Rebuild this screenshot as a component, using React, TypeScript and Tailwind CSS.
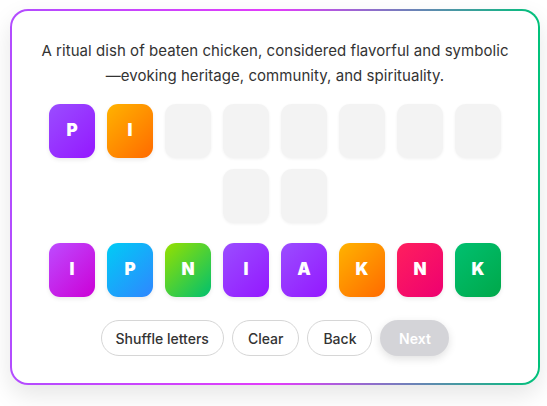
import React from "react";

const slotTop = [
  { l: "P", g: "bg-[linear-gradient(135deg,#9a4dff,#9418ff)]" },
  { l: "I", g: "bg-[linear-gradient(135deg,#ffb300,#ff6a00)]" },
];

const letters = [
  { l: "I", g: "bg-[linear-gradient(135deg,#bd4bff,#cc00d6)]" },
  { l: "P", g: "bg-[linear-gradient(135deg,#00ccf5,#2f86ff)]" },
  { l: "N", g: "bg-[linear-gradient(135deg,#96e000,#00c06e)]" },
  { l: "I", g: "bg-[linear-gradient(135deg,#9a4dff,#9418ff)]" },
  { l: "A", g: "bg-[linear-gradient(135deg,#9a4dff,#9418ff)]" },
  { l: "K", g: "bg-[linear-gradient(135deg,#ffb300,#ff6a00)]" },
  { l: "N", g: "bg-[linear-gradient(135deg,#ff1f5e,#ee0070)]" },
  { l: "K", g: "bg-[linear-gradient(135deg,#00c070,#00a84a)]" },
];

function Tile({ l, g }: { l: string; g: string }) {
  return (
    <div
      className={`w-[46px] h-[54px] rounded-[11px] ${g} flex items-center justify-center text-white text-[17px] font-black shadow-[0_2px_4px_rgba(0,0,0,0.08)]`}
    >
      {l}
    </div>
  );
}

function Empty() {
  return <div className="w-[46px] h-[54px] rounded-[11px] bg-[#f3f3f3] shadow-[0_1px_3px_rgba(0,0,0,0.06)]" />;
}

export default function App() {
  return (
    <div className="min-h-screen bg-white pt-[9px] pl-[10px]" style={{ fontFamily: "Inter, 'Noto Sans', sans-serif" }}>
      <div className="w-[530px] h-[376px] rounded-[18px] p-[2px] bg-[linear-gradient(90deg,#b24cff_0%,#e23cfa_50%,#00c27a_100%)] shadow-[0_10px_24px_rgba(0,0,0,0.10)]">
        <div className="w-full h-full rounded-[16px] bg-white flex flex-col items-center pt-[27px]">
          <p className="text-[15px] leading-[25px] text-[#333] text-center w-[480px] tracking-[0.05px]">
            A ritual dish of beaten chicken, considered flavorful and symbolic —evoking heritage, community, and spirituality.
          </p>
          <div className="mt-[16px] w-[452px] flex flex-wrap justify-center gap-x-[12px] gap-y-[11px]">
            {slotTop.map((t, i) => (
              <Tile key={"s" + i} l={t.l} g={t.g} />
            ))}
            {Array.from({ length: 8 }).map((_, i) => (
              <Empty key={i} />
            ))}
          </div>
          <div className="mt-[20px] flex gap-[12px]">
            {letters.map((t, i) => (
              <Tile key={i} l={t.l} g={t.g} />
            ))}
          </div>
          <div className="mt-[23px] flex gap-[8px]">
            <button className="h-[36px] px-[14px] rounded-full border border-[#d6d6d6] bg-white text-[14px] font-medium text-[#333]">
              Shuffle letters
            </button>
            <button className="h-[36px] px-[15px] rounded-full border border-[#d6d6d6] bg-white text-[14px] font-medium text-[#333]">
              Clear
            </button>
            <button className="h-[36px] px-[15px] rounded-full border border-[#d6d6d6] bg-white text-[14px] font-medium text-[#333]">
              Back
            </button>
            <button className="h-[36px] w-[69px] rounded-full bg-[#d4d4d8] text-[14px] font-semibold text-white shadow-[0_3px_8px_rgba(0,0,0,0.12)]">
              Next
            </button>
          </div>
        </div>
      </div>
    </div>
  );
}
